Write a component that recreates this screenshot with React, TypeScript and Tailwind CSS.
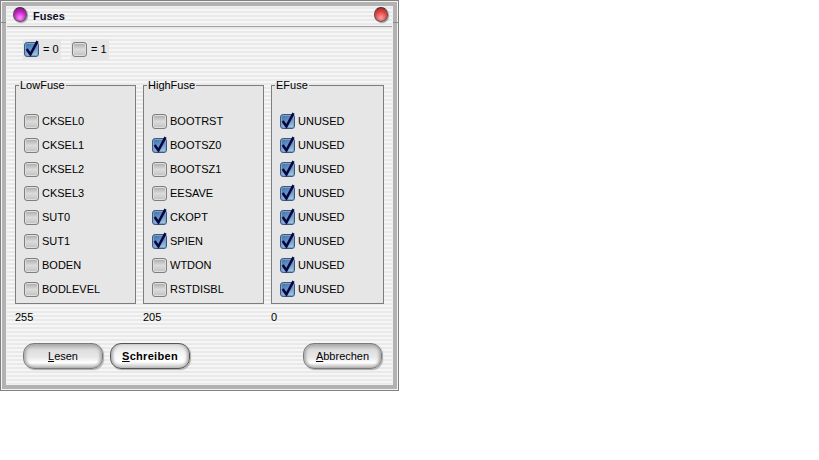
import React from "react";

const F = "font-['Liberation_Sans',Arial,sans-serif]";

function Box({ on }: { on: boolean }) {
  return (
    <span
      className={`relative block w-[15px] h-[15px] shrink-0 rounded-[3px] border ${
        on
          ? "border-[#3a5a80] bg-[linear-gradient(160deg,#3f6fa3,#6f9bc8_55%,#b5d2ee)] shadow-[inset_0_0_0_1px_#7fa3c8]"
          : "border-[#7e7e7e] bg-[linear-gradient(180deg,#a8a8a8,#dcdcdc_50%,#c0c0c0)] shadow-[inset_0_0_0_1px_#dedede]"
      }`}
    >
      {on && (
        <svg viewBox="0 0 14 14" className="absolute left-[-1px] top-[-1px] w-[15px] h-[15px] overflow-visible">
          <path d="M2.5 6.5 L6 11.5 L12.6 -0.8" fill="none" stroke="#05053f" strokeWidth="2.3" />
        </svg>
      )}
    </span>
  );
}

function Row({ label, on }: { label: string; on: boolean }) {
  return (
    <div className="flex items-center h-[24px] pl-[8px]">
      <Box on={on} />
      <span className="ml-[3px] text-[11px] leading-none text-black">{label}</span>
    </div>
  );
}

function Group({ title, w, items }: { title: string; w: string; items: [string, boolean][] }) {
  return (
    <fieldset className={`${w} h-[225px] border border-[#7d7d7d] bg-[#e6e6e6] px-0 m-0 min-w-0`}>
      <legend className="ml-[3px] px-[1px] text-[11px] leading-[13px] text-black">{title}</legend>
      <div className="pt-[17px]">
        {items.map(([l, o], i) => (
          <Row key={i} label={l} on={o} />
        ))}
      </div>
    </fieldset>
  );
}

function Btn({ children, w, bold }: { children: React.ReactNode; w: string; bold?: boolean }) {
  return (
    <div
      className={`${w} h-[26px] flex items-center justify-center rounded-[11px] border text-[11px] text-black ${
        bold
          ? "font-bold tracking-[0.3px] border-[#555] bg-[linear-gradient(180deg,#dcdcdc,#f4f4f4_35%,#ffffff_75%,#c0c0c0)]"
          : "border-[#7a7a7a] bg-[linear-gradient(180deg,#a8a8a8,#dedede_25%,#e8e8e8_55%,#ffffff_78%,#b4b4b4)]"
      } shadow-[inset_3px_0_3px_-1px_#aaa,inset_-3px_0_3px_-1px_#aaa,1px_1px_1px_#aaa]`}
    >
      {children}
    </div>
  );
}

const low: [string, boolean][] = ["CKSEL0", "CKSEL1", "CKSEL2", "CKSEL3", "SUT0", "SUT1", "BODEN", "BODLEVEL"].map((s) => [s, false]);
const high: [string, boolean][] = [
  ["BOOTRST", false],
  ["BOOTSZ0", true],
  ["BOOTSZ1", false],
  ["EESAVE", false],
  ["CKOPT", true],
  ["SPIEN", true],
  ["WTDON", false],
  ["RSTDISBL", false],
];
const ef: [string, boolean][] = Array.from({ length: 8 }, () => ["UNUSED", true] as [string, boolean]);

const stripes = "bg-[repeating-linear-gradient(180deg,#e9e9e9_0px,#e9e9e9_2px,#f6f6f6_2px,#f6f6f6_4px)]";

export default function App() {
  return (
    <div className={`w-[819px] h-[460px] bg-white ${F}`}>
      <div className="relative w-[399px] h-[391px] border border-[#808080] bg-[#b2b2b2]">
        <div className="absolute left-[-1px] top-[21px] w-[6px] h-px bg-[#8a8a8a]" />
        <div className="absolute right-[-1px] top-[21px] w-[6px] h-px bg-[#8a8a8a]" />
        <div className="w-full h-full border border-[#f4f4f4] p-[4px]">
          <div className={`w-full h-full flex flex-col border border-[#f0f0f0] ${stripes}`}>
            <div className="h-[18px] flex pl-[6px] pr-[4px] shrink-0 justify-between">
              <div className="flex">
                <span className="block w-[14px] h-[15px] rounded-full border border-[#555] border-t-[#333] bg-[radial-gradient(circle_at_50%_75%,#ff90ff,#c020c0_55%,#80107f)] shadow-[1px_1px_1px_#999]" />
                <span className="ml-[6px] mt-[3px] text-[11px] leading-[13px] font-bold text-[#101028]">Fuses</span>
              </div>
              <span className="block w-[14px] h-[15px] rounded-full border border-[#555] border-t-[#333] bg-[radial-gradient(circle_at_50%_75%,#ffa0a0,#e04040_55%,#a02020)] shadow-[1px_1px_1px_#999]" />
            </div>
            <div className="h-px bg-[#a0a0a0] shrink-0 mt-[1px]" />
            <div className="flex items-center gap-[10px] ml-[16px] mt-[12px] shrink-0">
              <div className="flex items-center h-[21px] w-[38px] bg-[#e6e6e6] pl-[1px]">
                <Box on />
                <span className="ml-[4px] text-[11px] leading-none">= 0</span>
              </div>
              <div className="flex items-center h-[21px] w-[38px] bg-[#e6e6e6] pl-[1px]">
                <Box on={false} />
                <span className="ml-[4px] text-[11px] leading-none">= 1</span>
              </div>
            </div>
            <div className="flex gap-[7px] ml-[8px] mt-[19px] shrink-0">
              <Group title="LowFuse" w="w-[121px]" items={low} />
              <Group title="HighFuse" w="w-[121px]" items={high} />
              <Group title="EFuse" w="w-[113px]" items={ef} />
            </div>
            <div className="flex ml-[8px] mt-[6px] text-[11px] leading-[14px] text-black shrink-0">
              <span className="w-[128px]">255</span>
              <span className="w-[128px]">205</span>
              <span>0</span>
            </div>
            <div className="flex items-center pl-[16px] pr-[10px] mt-[19px] shrink-0">
              <Btn w="w-[80px]"><span><u>L</u>esen</span></Btn>
              <div className="w-[7px]" />
              <Btn w="w-[80px]" bold><span><u>S</u>chreiben</span></Btn>
              <div className="flex-1" />
              <Btn w="w-[79px]"><span><u>A</u>bbrechen</span></Btn>
            </div>
          </div>
        </div>
      </div>
    </div>
  );
}
